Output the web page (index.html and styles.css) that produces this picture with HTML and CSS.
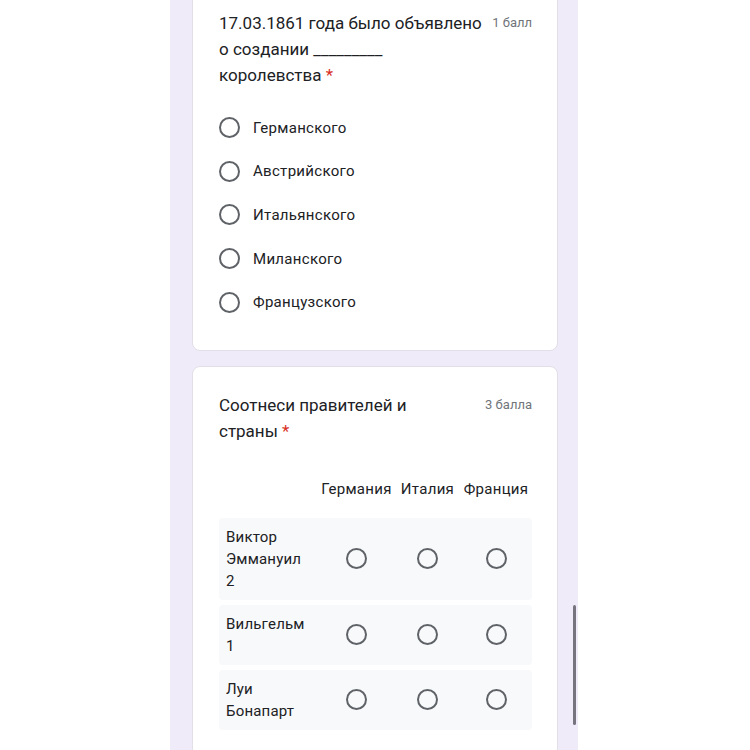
FILE: index.html
```html
<!DOCTYPE html>
<html lang="ru">
<head>
<meta charset="utf-8">
<link rel="stylesheet" href="styles.css">
</head>
<body>
<div class="page">
  <div class="card card-first">
    <div class="q-head">
      <div class="q-title">17.03.1861 года было объявлено о создании _________ королевства <span class="req">*</span></div>
      <div class="q-points">1 балл</div>
    </div>
    <div class="options">
      <div class="option"><span class="radio"></span><span class="opt-label">Германского</span></div>
      <div class="option"><span class="radio"></span><span class="opt-label">Австрийского</span></div>
      <div class="option"><span class="radio"></span><span class="opt-label">Итальянского</span></div>
      <div class="option"><span class="radio"></span><span class="opt-label">Миланского</span></div>
      <div class="option"><span class="radio"></span><span class="opt-label">Французского</span></div>
    </div>
  </div>

  <div class="card">
    <div class="q-head">
      <div class="q-title q-title-narrow">Соотнеси правителей и страны <span class="req">*</span></div>
      <div class="q-points">3 балла</div>
    </div>
    <div class="grid">
      <div class="grid-head">
        <span></span>
        <span class="col">Германия</span>
        <span class="col">Италия</span>
        <span class="col">Франция</span>
      </div>
      <div class="grid-row">
        <span class="row-label">Виктор Эммануил 2</span>
        <span class="cell"><span class="radio"></span></span>
        <span class="cell"><span class="radio"></span></span>
        <span class="cell"><span class="radio"></span></span>
      </div>
      <div class="grid-row">
        <span class="row-label">Вильгельм 1</span>
        <span class="cell"><span class="radio"></span></span>
        <span class="cell"><span class="radio"></span></span>
        <span class="cell"><span class="radio"></span></span>
      </div>
      <div class="grid-row">
        <span class="row-label">Луи Бонапарт</span>
        <span class="cell"><span class="radio"></span></span>
        <span class="cell"><span class="radio"></span></span>
        <span class="cell"><span class="radio"></span></span>
      </div>
    </div>
  </div>

  <div class="scroll-thumb"></div>
</div>
</body>
</html>
```

FILE: styles.css
```css
html, body {
  margin: 0;
  padding: 0;
  height: 750px;
  overflow: hidden;
  background: #ffffff;
}

body {
  font-family: Roboto, "Liberation Sans", sans-serif;
  color: #202124;
}

.page {
  position: relative;
  margin-left: 170px;
  width: 408px;
  height: 750px;
  box-sizing: border-box;
  padding: 0 20px 0 22px;
  background: #f0ebf8;
  display: flex;
  flex-direction: column;
  gap: 15px;
}

.card {
  background: #ffffff;
  border: 1px solid #e2dfe8;
  border-radius: 8px;
  padding: 25px 25px 26px 26px;
  flex-shrink: 0;
}

.card-first {
  margin-top: -16px;
}

.q-head {
  display: flex;
  align-items: flex-start;
}

.q-title {
  flex: 1;
  font-size: 17px;
  line-height: 26px;
  color: #202124;
  padding-right: 6px;
}

.q-title-narrow {
  flex: 0 1 auto;
  max-width: 240px;
  margin-right: auto;
}

.req {
  color: #d93025;
}

.q-points {
  font-size: 13px;
  line-height: 26px;
  color: #70757a;
  white-space: nowrap;
}

.options {
  margin-top: 18px;
  display: flex;
  flex-direction: column;
}

.option {
  height: 43.6px;
  display: flex;
  align-items: center;
}

.radio {
  display: inline-block;
  width: 17px;
  height: 17px;
  border: 2px solid #5f6368;
  border-radius: 50%;
  flex-shrink: 0;
}

.opt-label {
  margin-left: 13px;
  font-size: 15px;
  letter-spacing: 0.3px;
  color: #202124;
}

.grid {
  margin-top: 34px;
  display: flex;
  flex-direction: column;
  gap: 5px;
}

.grid-head,
.grid-row {
  display: grid;
  grid-template-columns: 102px 71px 71px 66px;
  padding-right: 4px;
  align-items: center;
}

.grid-head {
  font-size: 15px;
  line-height: 22px;
  letter-spacing: 0.3px;
  margin-bottom: 13px;
}

.col {
  text-align: center;
  white-space: nowrap;
}

.grid-row {
  background: #f8f9fa;
  border-radius: 4px;
  padding-top: 8px;
  padding-bottom: 8px;
}

.row-label {
  font-size: 15px;
  line-height: 22px;
  letter-spacing: 0.2px;
  padding: 0 10px 0 7px;
}

.cell {
  display: flex;
  justify-content: center;
}

.scroll-thumb {
  position: absolute;
  left: 403px;
  top: 605px;
  width: 3px;
  height: 120px;
  border-radius: 2px;
  background: #77747f;
}
```
